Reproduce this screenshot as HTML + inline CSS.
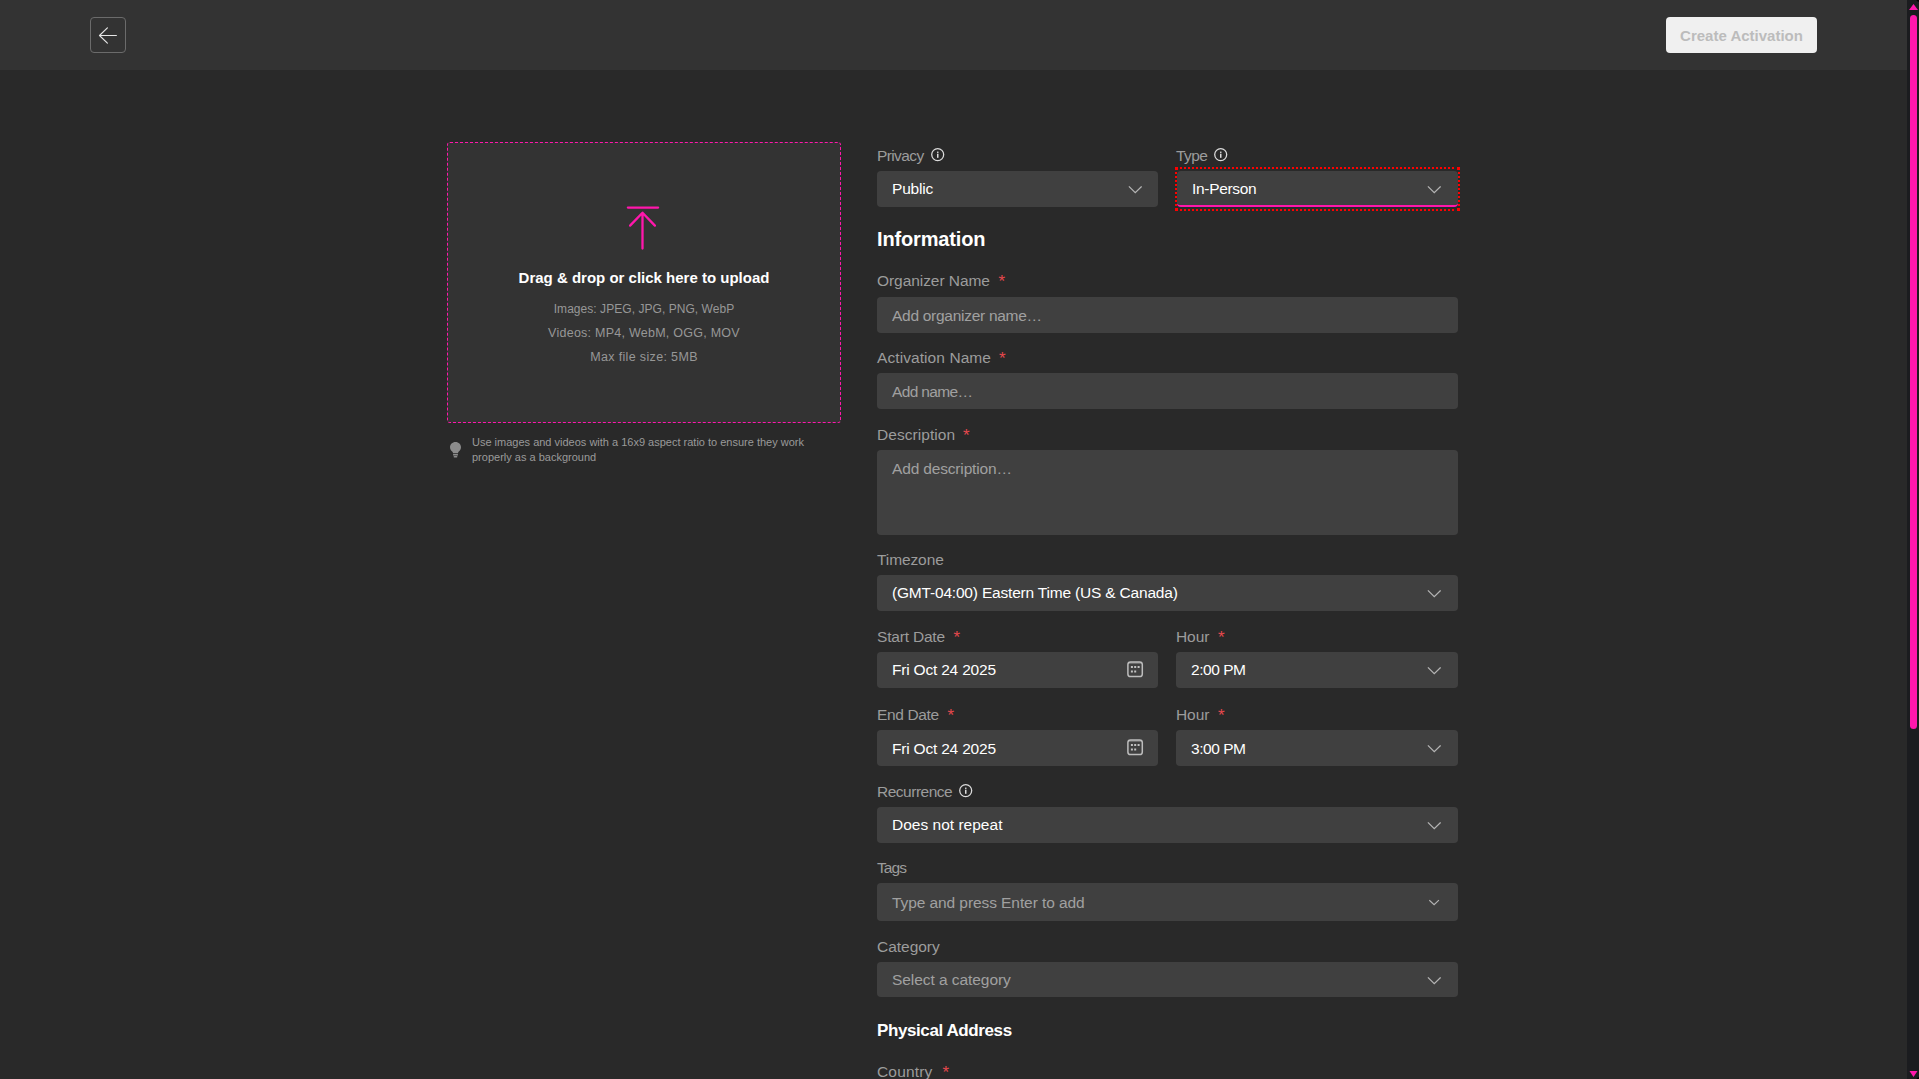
<!DOCTYPE html>
<html>
<head>
<meta charset="utf-8">
<style>
html,body{margin:0;padding:0;}
body{width:1919px;height:1079px;overflow:hidden;background:#292929;font-family:"Liberation Sans",sans-serif;position:relative;}
.hdr{position:absolute;left:0;top:0;width:1907px;height:70px;background:#333333;}
.back{position:absolute;left:90px;top:17px;width:34px;height:34px;border:1px solid #6b6b6b;border-radius:4px;}
.back svg{position:absolute;left:0;top:0;}
.create{position:absolute;left:1666px;top:17px;width:151px;height:36px;background:#f0f0f0;border-radius:4px;color:#bcbcbc;font-weight:bold;font-size:15px;line-height:38px;text-align:center;}
.sb{position:absolute;left:1907px;top:0;width:12px;height:1079px;background:#1b1c1f;}
.thumb{position:absolute;left:3px;top:15px;width:7px;height:714px;background:#ff17ac;border-radius:4px;}
.upload{position:absolute;left:447px;top:142px;width:392px;height:279px;border:1px dashed #ff17ac;border-radius:3px;background:#333333;}
.up-title{position:absolute;left:447px;width:394px;top:268px;text-align:center;color:#ffffff;font-weight:bold;font-size:15px;line-height:20px;}
.up-sub{position:absolute;left:447px;width:394px;text-align:center;color:#979797;font-size:12.5px;line-height:20px;}
.hint{position:absolute;left:472px;top:435px;color:#9a9a9a;font-size:11px;line-height:15px;width:360px;}
.lbl{position:absolute;color:#9c9c9c;font-size:15.5px;line-height:20px;white-space:nowrap;}
.req{position:absolute;color:#e5484d;font-size:17px;line-height:20px;margin-top:1px;}
.h{position:absolute;left:877px;color:#ffffff;font-weight:bold;white-space:nowrap;}
.inp{position:absolute;background:#404040;border-radius:4px;}
.inp .t{position:absolute;left:15px;top:0;font-size:15.5px;color:#ffffff;white-space:nowrap;}
.inp .p{color:#a0a0a0;}
.chev{position:absolute;right:17px;top:14px;}
.info{position:absolute;}
</style>
</head>
<body>
<div class="hdr">
  <div class="back">
    <svg width="34" height="34" viewBox="0 0 34 34"><path d="M8.5 17.5 L25.4 17.5 M16.4 9.9 L8.5 17.5 L16.4 25.1" fill="none" stroke="#e6e6e6" stroke-width="1.15" stroke-linecap="round" stroke-linejoin="round"/></svg>
  </div>
  <div class="create">Create Activation</div>
</div>
<div class="sb"><div class="thumb"></div><svg style="position:absolute;left:0;top:0" width="12" height="1079"><path d="M2 10 L11 10 L6.5 4 Z" fill="#ff17ac"/><path d="M2.5 1071 L10.5 1071 L6.5 1077 Z" fill="#ff17ac"/></svg></div>

<div class="upload"></div>
<svg style="position:absolute;left:620px;top:200px" width="46" height="56" viewBox="0 0 46 56">
  <path d="M7.9 7.6 L38.1 7.6 M22.5 13 L22.5 48.6 M10.1 25.6 L22.5 12.7 L34.9 25.6" fill="none" stroke="#ff17ac" stroke-width="2.3" stroke-linecap="round" stroke-linejoin="round"/>
</svg>
<div class="up-title">Drag &amp; drop or click here to upload</div>
<div class="up-sub" style="top:299px;font-size:12px;letter-spacing:0.05px">Images: JPEG, JPG, PNG, WebP</div>
<div class="up-sub" style="top:323px;letter-spacing:0.25px">Videos: MP4, WebM, OGG, MOV</div>
<div class="up-sub" style="top:347px;letter-spacing:0.35px">Max file size: 5MB</div>
<svg style="position:absolute;left:449px;top:441px" width="14" height="17" viewBox="0 0 14 17">
  <path d="M6.5 1 C3.3 1 1 3.4 1 6.3 C1 8.2 2 9.5 3.2 10.6 C3.7 11.1 4 11.6 4 12.2 L9 12.2 C9 11.6 9.3 11.1 9.8 10.6 C11 9.5 12 8.2 12 6.3 C12 3.4 9.7 1 6.5 1 Z" fill="#8c8c8c"/>
  <rect x="4" y="13" width="5" height="1.6" rx="0.6" fill="#8c8c8c"/>
  <rect x="4.6" y="15" width="3.8" height="1.4" rx="0.7" fill="#8c8c8c"/>
</svg>
<div class="hint">Use images and videos with a 16x9 aspect ratio to ensure they work<br>properly as a background</div>

<div class="lbl" style="left:877px;top:146px;letter-spacing:-0.61px">Privacy</div>
<svg class="info" style="left:930px;top:147px" width="16" height="16" viewBox="0 0 16 16"><circle cx="7.7" cy="7.6" r="6" fill="none" stroke="#dcdcdc" stroke-width="1.25"/><rect x="7" y="4.6" width="1.5" height="1.3" fill="#dcdcdc"/><rect x="7" y="6.7" width="1.5" height="4.1" fill="#dcdcdc"/></svg>
<div class="lbl" style="left:1176px;top:146px;letter-spacing:-0.54px">Type</div>
<svg class="info" style="left:1213px;top:147px" width="16" height="16" viewBox="0 0 16 16"><circle cx="7.7" cy="7.6" r="6" fill="none" stroke="#dcdcdc" stroke-width="1.25"/><rect x="7" y="4.6" width="1.5" height="1.3" fill="#dcdcdc"/><rect x="7" y="6.7" width="1.5" height="4.1" fill="#dcdcdc"/></svg>
<div class="inp" style="left:877px;top:171px;width:281px;height:36px;"><div class="t" style="line-height:36px;letter-spacing:-0.19px;">Public</div><svg class="chev" style="right:16px" width="14" height="10" viewBox="0 0 14 10"><path d="M0.9 1.4 L7.25 7.7 L13.6 1.4" fill="none" stroke="#b4b4b4" stroke-width="1.25"/></svg></div>
<div class="inp" style="left:1177px;top:171px;width:281px;height:34px;border-bottom:2px solid #ff17ac;"><div class="t" style="line-height:34px;letter-spacing:-0.32px;line-height:36px">In-Person</div><svg class="chev" width="14" height="10" viewBox="0 0 14 10"><path d="M0.9 1.4 L7.25 7.7 L13.6 1.4" fill="none" stroke="#b4b4b4" stroke-width="1.25"/></svg></div>
<div class="h" style="top:227px;font-size:20px;line-height:24px;letter-spacing:-0.15px">Information</div>
<div class="lbl" style="left:877px;top:271px;letter-spacing:-0.06px">Organizer Name</div>
<div class="req" style="left:998.5px;top:271px">*</div>
<div class="inp" style="left:877px;top:297px;width:581px;height:36px;"><div class="t p" style="line-height:36px;letter-spacing:-0.28px;top:1px">Add organizer name…</div></div>
<div class="lbl" style="left:877px;top:348px;letter-spacing:0.08px">Activation Name</div>
<div class="req" style="left:999px;top:348px">*</div>
<div class="inp" style="left:877px;top:373px;width:581px;height:36px;"><div class="t p" style="line-height:36px;letter-spacing:-0.64px;top:1px">Add name…</div></div>
<div class="lbl" style="left:877px;top:425px;letter-spacing:0.05px">Description</div>
<div class="req" style="left:963px;top:425px">*</div>
<div class="inp" style="left:877px;top:450px;width:581px;height:85px"><div class="t p" style="line-height:36px;top:1px;letter-spacing:-0.16px">Add description…</div></div>
<div class="lbl" style="left:877px;top:550px;letter-spacing:-0.1px">Timezone</div>
<div class="inp" style="left:877px;top:575px;width:581px;height:36px;"><div class="t" style="line-height:36px;letter-spacing:-0.19px;">(GMT-04:00) Eastern Time (US &amp; Canada)</div><svg class="chev" width="14" height="10" viewBox="0 0 14 10"><path d="M0.9 1.4 L7.25 7.7 L13.6 1.4" fill="none" stroke="#b4b4b4" stroke-width="1.25"/></svg></div>
<div class="lbl" style="left:877px;top:627px;letter-spacing:-0.19px">Start Date</div>
<div class="req" style="left:953.5px;top:627px">*</div>
<div class="lbl" style="left:1176px;top:627px;letter-spacing:-0.07px">Hour</div>
<div class="req" style="left:1218px;top:627px">*</div>
<div class="inp" style="left:877px;top:652px;width:281px;height:36px;"><div class="t" style="line-height:36px;letter-spacing:-0.2px;">Fri Oct 24 2025</div></div>
<svg style="position:absolute;left:1127px;top:661px" width="18" height="18" viewBox="0 0 18 18"><rect x="0.9" y="0.9" width="14.4" height="14.6" rx="2.6" fill="none" stroke="#bdbdbd" stroke-width="1.5"/><rect x="1" y="1" width="14" height="2" fill="#bdbdbd" opacity="0.35"/><rect x="3.9" y="5" width="2" height="2" fill="#c2c2c2"/><rect x="7.2" y="5" width="2" height="2" fill="#c2c2c2"/><rect x="10.6" y="5" width="2" height="2" fill="#c2c2c2"/><rect x="3.9" y="9.5" width="2" height="2" fill="#c2c2c2"/><rect x="7.2" y="9.5" width="2" height="2" fill="#c2c2c2"/></svg>
<div class="inp" style="left:1176px;top:652px;width:282px;height:36px;"><div class="t" style="line-height:36px;letter-spacing:-0.46px;">2:00 PM</div><svg class="chev" width="14" height="10" viewBox="0 0 14 10"><path d="M0.9 1.4 L7.25 7.7 L13.6 1.4" fill="none" stroke="#b4b4b4" stroke-width="1.25"/></svg></div>
<div class="lbl" style="left:877px;top:705px;letter-spacing:-0.37px">End Date</div>
<div class="req" style="left:947.5px;top:705px">*</div>
<div class="lbl" style="left:1176px;top:705px;letter-spacing:-0.07px">Hour</div>
<div class="req" style="left:1218px;top:705px">*</div>
<div class="inp" style="left:877px;top:730px;width:281px;height:36px;"><div class="t" style="line-height:36px;letter-spacing:-0.2px;top:1px">Fri Oct 24 2025</div></div>
<svg style="position:absolute;left:1127px;top:739px" width="18" height="18" viewBox="0 0 18 18"><rect x="0.9" y="0.9" width="14.4" height="14.6" rx="2.6" fill="none" stroke="#bdbdbd" stroke-width="1.5"/><rect x="1" y="1" width="14" height="2" fill="#bdbdbd" opacity="0.35"/><rect x="3.9" y="5" width="2" height="2" fill="#c2c2c2"/><rect x="7.2" y="5" width="2" height="2" fill="#c2c2c2"/><rect x="10.6" y="5" width="2" height="2" fill="#c2c2c2"/><rect x="3.9" y="9.5" width="2" height="2" fill="#c2c2c2"/><rect x="7.2" y="9.5" width="2" height="2" fill="#c2c2c2"/></svg>
<div class="inp" style="left:1176px;top:730px;width:282px;height:36px;"><div class="t" style="line-height:36px;letter-spacing:-0.46px;top:1px">3:00 PM</div><svg class="chev" width="14" height="10" viewBox="0 0 14 10"><path d="M0.9 1.4 L7.25 7.7 L13.6 1.4" fill="none" stroke="#b4b4b4" stroke-width="1.25"/></svg></div>
<div class="lbl" style="left:877px;top:782px;letter-spacing:-0.49px">Recurrence</div>
<svg class="info" style="left:958px;top:783px" width="16" height="16" viewBox="0 0 16 16"><circle cx="7.7" cy="7.6" r="6" fill="none" stroke="#dcdcdc" stroke-width="1.25"/><rect x="7" y="4.6" width="1.5" height="1.3" fill="#dcdcdc"/><rect x="7" y="6.7" width="1.5" height="4.1" fill="#dcdcdc"/></svg>
<div class="inp" style="left:877px;top:807px;width:581px;height:36px;"><div class="t" style="line-height:36px;letter-spacing:0.01px;">Does not repeat</div><svg class="chev" width="14" height="10" viewBox="0 0 14 10"><path d="M0.9 1.4 L7.25 7.7 L13.6 1.4" fill="none" stroke="#b4b4b4" stroke-width="1.25"/></svg></div>
<div class="lbl" style="left:877px;top:858px;letter-spacing:-0.91px">Tags</div>
<div class="inp" style="left:877px;top:883px;width:581px;height:38px;"><div class="t p" style="line-height:38px;letter-spacing:-0.08px;top:0.5px">Type and press Enter to add</div><svg class="chev" style="top:16px;right:18px" width="11" height="8" viewBox="0 0 11 8"><path d="M0.3 1.15 L5.1 5.65 L9.9 1.15" fill="none" stroke="#b4b4b4" stroke-width="1.15"/></svg></div>
<div class="lbl" style="left:877px;top:937px;letter-spacing:-0.02px">Category</div>
<div class="inp" style="left:877px;top:962px;width:581px;height:35px;"><div class="t p" style="line-height:35px;letter-spacing:-0.06px;">Select a category</div><svg class="chev" width="14" height="10" viewBox="0 0 14 10"><path d="M0.9 1.4 L7.25 7.7 L13.6 1.4" fill="none" stroke="#b4b4b4" stroke-width="1.25"/></svg></div>
<div class="h" style="top:1020px;font-size:17px;line-height:22px;letter-spacing:-0.4px">Physical Address</div>
<div class="lbl" style="left:877px;top:1062px;letter-spacing:0.16px">Country</div>
<div class="req" style="left:942.5px;top:1062px">*</div>
<svg style="position:absolute;left:0;top:0" width="1919" height="1079"><rect x="1175" y="167" width="3" height="3" fill="#ff0000"/><rect x="1457" y="167" width="3" height="3" fill="#ff0000"/><rect x="1175" y="208" width="3" height="3" fill="#ff0000"/><rect x="1457" y="208" width="3" height="3" fill="#ff0000"/><rect x="1180" y="167" width="2" height="2" fill="#ff0000"/><rect x="1180" y="209" width="2" height="2" fill="#ff0000"/><rect x="1184" y="167" width="2" height="2" fill="#ff0000"/><rect x="1184" y="209" width="2" height="2" fill="#ff0000"/><rect x="1188" y="167" width="2" height="2" fill="#ff0000"/><rect x="1188" y="209" width="2" height="2" fill="#ff0000"/><rect x="1192" y="167" width="2" height="2" fill="#ff0000"/><rect x="1192" y="209" width="2" height="2" fill="#ff0000"/><rect x="1196" y="167" width="2" height="2" fill="#ff0000"/><rect x="1196" y="209" width="2" height="2" fill="#ff0000"/><rect x="1200" y="167" width="2" height="2" fill="#ff0000"/><rect x="1200" y="209" width="2" height="2" fill="#ff0000"/><rect x="1204" y="167" width="2" height="2" fill="#ff0000"/><rect x="1204" y="209" width="2" height="2" fill="#ff0000"/><rect x="1208" y="167" width="2" height="2" fill="#ff0000"/><rect x="1208" y="209" width="2" height="2" fill="#ff0000"/><rect x="1212" y="167" width="2" height="2" fill="#ff0000"/><rect x="1212" y="209" width="2" height="2" fill="#ff0000"/><rect x="1216" y="167" width="2" height="2" fill="#ff0000"/><rect x="1216" y="209" width="2" height="2" fill="#ff0000"/><rect x="1220" y="167" width="2" height="2" fill="#ff0000"/><rect x="1220" y="209" width="2" height="2" fill="#ff0000"/><rect x="1224" y="167" width="2" height="2" fill="#ff0000"/><rect x="1224" y="209" width="2" height="2" fill="#ff0000"/><rect x="1228" y="167" width="2" height="2" fill="#ff0000"/><rect x="1228" y="209" width="2" height="2" fill="#ff0000"/><rect x="1232" y="167" width="2" height="2" fill="#ff0000"/><rect x="1232" y="209" width="2" height="2" fill="#ff0000"/><rect x="1236" y="167" width="2" height="2" fill="#ff0000"/><rect x="1236" y="209" width="2" height="2" fill="#ff0000"/><rect x="1240" y="167" width="2" height="2" fill="#ff0000"/><rect x="1240" y="209" width="2" height="2" fill="#ff0000"/><rect x="1244" y="167" width="2" height="2" fill="#ff0000"/><rect x="1244" y="209" width="2" height="2" fill="#ff0000"/><rect x="1248" y="167" width="2" height="2" fill="#ff0000"/><rect x="1248" y="209" width="2" height="2" fill="#ff0000"/><rect x="1252" y="167" width="2" height="2" fill="#ff0000"/><rect x="1252" y="209" width="2" height="2" fill="#ff0000"/><rect x="1256" y="167" width="2" height="2" fill="#ff0000"/><rect x="1256" y="209" width="2" height="2" fill="#ff0000"/><rect x="1260" y="167" width="2" height="2" fill="#ff0000"/><rect x="1260" y="209" width="2" height="2" fill="#ff0000"/><rect x="1264" y="167" width="2" height="2" fill="#ff0000"/><rect x="1264" y="209" width="2" height="2" fill="#ff0000"/><rect x="1268" y="167" width="2" height="2" fill="#ff0000"/><rect x="1268" y="209" width="2" height="2" fill="#ff0000"/><rect x="1272" y="167" width="2" height="2" fill="#ff0000"/><rect x="1272" y="209" width="2" height="2" fill="#ff0000"/><rect x="1276" y="167" width="2" height="2" fill="#ff0000"/><rect x="1276" y="209" width="2" height="2" fill="#ff0000"/><rect x="1280" y="167" width="2" height="2" fill="#ff0000"/><rect x="1280" y="209" width="2" height="2" fill="#ff0000"/><rect x="1284" y="167" width="2" height="2" fill="#ff0000"/><rect x="1284" y="209" width="2" height="2" fill="#ff0000"/><rect x="1288" y="167" width="2" height="2" fill="#ff0000"/><rect x="1288" y="209" width="2" height="2" fill="#ff0000"/><rect x="1292" y="167" width="2" height="2" fill="#ff0000"/><rect x="1292" y="209" width="2" height="2" fill="#ff0000"/><rect x="1296" y="167" width="2" height="2" fill="#ff0000"/><rect x="1296" y="209" width="2" height="2" fill="#ff0000"/><rect x="1300" y="167" width="2" height="2" fill="#ff0000"/><rect x="1300" y="209" width="2" height="2" fill="#ff0000"/><rect x="1304" y="167" width="2" height="2" fill="#ff0000"/><rect x="1304" y="209" width="2" height="2" fill="#ff0000"/><rect x="1308" y="167" width="2" height="2" fill="#ff0000"/><rect x="1308" y="209" width="2" height="2" fill="#ff0000"/><rect x="1312" y="167" width="2" height="2" fill="#ff0000"/><rect x="1312" y="209" width="2" height="2" fill="#ff0000"/><rect x="1316" y="167" width="2" height="2" fill="#ff0000"/><rect x="1316" y="209" width="2" height="2" fill="#ff0000"/><rect x="1320" y="167" width="2" height="2" fill="#ff0000"/><rect x="1320" y="209" width="2" height="2" fill="#ff0000"/><rect x="1324" y="167" width="2" height="2" fill="#ff0000"/><rect x="1324" y="209" width="2" height="2" fill="#ff0000"/><rect x="1328" y="167" width="2" height="2" fill="#ff0000"/><rect x="1328" y="209" width="2" height="2" fill="#ff0000"/><rect x="1332" y="167" width="2" height="2" fill="#ff0000"/><rect x="1332" y="209" width="2" height="2" fill="#ff0000"/><rect x="1336" y="167" width="2" height="2" fill="#ff0000"/><rect x="1336" y="209" width="2" height="2" fill="#ff0000"/><rect x="1340" y="167" width="2" height="2" fill="#ff0000"/><rect x="1340" y="209" width="2" height="2" fill="#ff0000"/><rect x="1344" y="167" width="2" height="2" fill="#ff0000"/><rect x="1344" y="209" width="2" height="2" fill="#ff0000"/><rect x="1348" y="167" width="2" height="2" fill="#ff0000"/><rect x="1348" y="209" width="2" height="2" fill="#ff0000"/><rect x="1352" y="167" width="2" height="2" fill="#ff0000"/><rect x="1352" y="209" width="2" height="2" fill="#ff0000"/><rect x="1356" y="167" width="2" height="2" fill="#ff0000"/><rect x="1356" y="209" width="2" height="2" fill="#ff0000"/><rect x="1360" y="167" width="2" height="2" fill="#ff0000"/><rect x="1360" y="209" width="2" height="2" fill="#ff0000"/><rect x="1364" y="167" width="2" height="2" fill="#ff0000"/><rect x="1364" y="209" width="2" height="2" fill="#ff0000"/><rect x="1368" y="167" width="2" height="2" fill="#ff0000"/><rect x="1368" y="209" width="2" height="2" fill="#ff0000"/><rect x="1372" y="167" width="2" height="2" fill="#ff0000"/><rect x="1372" y="209" width="2" height="2" fill="#ff0000"/><rect x="1376" y="167" width="2" height="2" fill="#ff0000"/><rect x="1376" y="209" width="2" height="2" fill="#ff0000"/><rect x="1380" y="167" width="2" height="2" fill="#ff0000"/><rect x="1380" y="209" width="2" height="2" fill="#ff0000"/><rect x="1384" y="167" width="2" height="2" fill="#ff0000"/><rect x="1384" y="209" width="2" height="2" fill="#ff0000"/><rect x="1388" y="167" width="2" height="2" fill="#ff0000"/><rect x="1388" y="209" width="2" height="2" fill="#ff0000"/><rect x="1392" y="167" width="2" height="2" fill="#ff0000"/><rect x="1392" y="209" width="2" height="2" fill="#ff0000"/><rect x="1396" y="167" width="2" height="2" fill="#ff0000"/><rect x="1396" y="209" width="2" height="2" fill="#ff0000"/><rect x="1400" y="167" width="2" height="2" fill="#ff0000"/><rect x="1400" y="209" width="2" height="2" fill="#ff0000"/><rect x="1404" y="167" width="2" height="2" fill="#ff0000"/><rect x="1404" y="209" width="2" height="2" fill="#ff0000"/><rect x="1408" y="167" width="2" height="2" fill="#ff0000"/><rect x="1408" y="209" width="2" height="2" fill="#ff0000"/><rect x="1412" y="167" width="2" height="2" fill="#ff0000"/><rect x="1412" y="209" width="2" height="2" fill="#ff0000"/><rect x="1416" y="167" width="2" height="2" fill="#ff0000"/><rect x="1416" y="209" width="2" height="2" fill="#ff0000"/><rect x="1420" y="167" width="2" height="2" fill="#ff0000"/><rect x="1420" y="209" width="2" height="2" fill="#ff0000"/><rect x="1424" y="167" width="2" height="2" fill="#ff0000"/><rect x="1424" y="209" width="2" height="2" fill="#ff0000"/><rect x="1428" y="167" width="2" height="2" fill="#ff0000"/><rect x="1428" y="209" width="2" height="2" fill="#ff0000"/><rect x="1432" y="167" width="2" height="2" fill="#ff0000"/><rect x="1432" y="209" width="2" height="2" fill="#ff0000"/><rect x="1436" y="167" width="2" height="2" fill="#ff0000"/><rect x="1436" y="209" width="2" height="2" fill="#ff0000"/><rect x="1440" y="167" width="2" height="2" fill="#ff0000"/><rect x="1440" y="209" width="2" height="2" fill="#ff0000"/><rect x="1444" y="167" width="2" height="2" fill="#ff0000"/><rect x="1444" y="209" width="2" height="2" fill="#ff0000"/><rect x="1448" y="167" width="2" height="2" fill="#ff0000"/><rect x="1448" y="209" width="2" height="2" fill="#ff0000"/><rect x="1452" y="167" width="2" height="2" fill="#ff0000"/><rect x="1452" y="209" width="2" height="2" fill="#ff0000"/><rect x="1175" y="172" width="2" height="2" fill="#ff0000"/><rect x="1458" y="172" width="2" height="2" fill="#ff0000"/><rect x="1175" y="176" width="2" height="2" fill="#ff0000"/><rect x="1458" y="176" width="2" height="2" fill="#ff0000"/><rect x="1175" y="180" width="2" height="2" fill="#ff0000"/><rect x="1458" y="180" width="2" height="2" fill="#ff0000"/><rect x="1175" y="184" width="2" height="2" fill="#ff0000"/><rect x="1458" y="184" width="2" height="2" fill="#ff0000"/><rect x="1175" y="188" width="2" height="2" fill="#ff0000"/><rect x="1458" y="188" width="2" height="2" fill="#ff0000"/><rect x="1175" y="192" width="2" height="2" fill="#ff0000"/><rect x="1458" y="192" width="2" height="2" fill="#ff0000"/><rect x="1175" y="196" width="2" height="2" fill="#ff0000"/><rect x="1458" y="196" width="2" height="2" fill="#ff0000"/><rect x="1175" y="200" width="2" height="2" fill="#ff0000"/><rect x="1458" y="200" width="2" height="2" fill="#ff0000"/><rect x="1175" y="204" width="2" height="2" fill="#ff0000"/><rect x="1458" y="204" width="2" height="2" fill="#ff0000"/></svg>
<div style="position:absolute;left:1916px;top:-3px;width:6px;height:5px;background:#000;border-radius:0 0 0 4px;"></div>
<div style="position:absolute;left:1916px;top:1077px;width:6px;height:5px;background:#000;border-radius:4px 0 0 0;"></div>
</body>
</html>
